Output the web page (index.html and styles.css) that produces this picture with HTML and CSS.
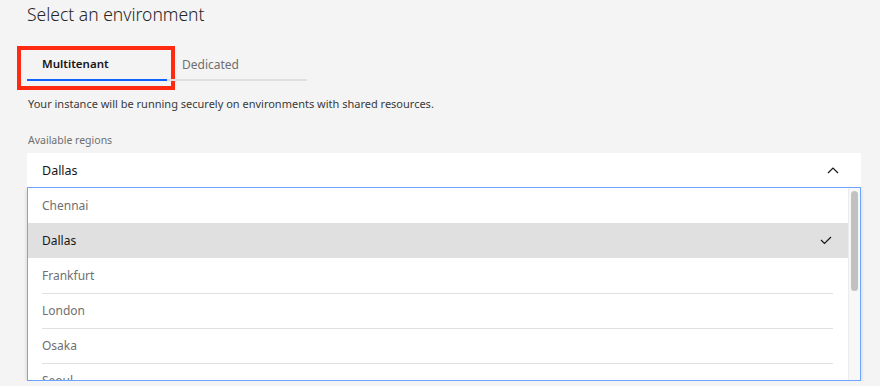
FILE: index.html
```html
<!DOCTYPE html>
<html lang="en">
<head>
  <meta charset="UTF-8" />
  <meta name="viewport" content="width=device-width, initial-scale=1.0" />
  <title>Select an environment</title>
  <link rel="stylesheet" href="styles.css">
</head>
<body>
  <h1 class="title">Select an environment</h1>

  <div class="tabs">
    <div class="tab tab-active">
      Multitenant
      <span class="callout"></span>
    </div>
    <div class="tab">Dedicated</div>
  </div>

  <p class="desc">Your instance will be running securely on environments with shared resources.</p>

  <div class="label">Available regions</div>

  <div class="field">
    <span>Dallas</span>
    <svg class="chevron" width="12" height="7" viewBox="0 0 12 7">
      <path d="M1 6 L6 1 L11 6" fill="none" stroke="#161616" stroke-width="1.2" />
    </svg>
  </div>

  <div class="menu">
    <ul class="options">
      <li class="option">Chennai</li>
      <li class="option option-selected">
        Dallas
        <svg class="check" width="12" height="9" viewBox="0 0 12 9">
          <path d="M1 4 L4.5 7.5 L11 1" fill="none" stroke="#161616" stroke-width="1.2" />
        </svg>
      </li>
      <li class="option">Frankfurt</li>
      <li class="option">London</li>
      <li class="option">Osaka</li>
      <li class="option">Seoul</li>
    </ul>
    <div class="scrollbar">
      <div class="thumb"></div>
    </div>
  </div>
</body>
</html>
```

FILE: styles.css
```css
body {
  margin: 0;
  padding: 0 19px 0 27px;
  background: #f4f4f4;
  font-family: "Noto Sans", "Open Sans", Arial, sans-serif;
  color: #161616;
}

.title {
  margin: 0;
  padding-top: 1px;
  font-size: 17.5px;
  font-weight: 300;
  line-height: 26px;
  color: #262626;
}

.tabs {
  display: flex;
  margin-top: 22px;
}

.tab {
  position: relative;
  width: 140px;
  height: 32px;
  box-sizing: border-box;
  padding: 7px 0 0 15px;
  font-size: 12px;
  color: #6f6f6f;
  border-bottom: 2px solid #e0e0e0;
}

.tab-active {
  font-weight: 600;
  font-size: 11.5px;
  color: #161616;
  border-bottom-color: #0f62fe;
}

.callout {
  position: absolute;
  left: -10px;
  top: -3px;
  width: 158px;
  height: 44px;
  box-sizing: border-box;
  border: 4px solid #ff2a12;
}

.desc {
  margin: 15px 0 0 1px;
  font-size: 11px;
  line-height: 16px;
  color: #393939;
}

.label {
  margin: 21px 0 0 1px;
  font-size: 10.5px;
  line-height: 14px;
  color: #6f6f6f;
}

.field {
  display: flex;
  align-items: center;
  justify-content: space-between;
  margin-top: 6px;
  height: 34px;
  padding: 0 22px 0 15px;
  background: #fff;
  font-size: 12.5px;
}

.chevron {
  display: block;
}

.menu {
  display: flex;
  height: 194px;
  box-sizing: border-box;
  border: 1px solid #6ea6ff;
  background: #fff;
  box-shadow: 0 2px 4px rgba(0, 0, 0, 0.15);
  overflow: hidden;
}

.options {
  flex: 1;
  margin: 0;
  padding: 0;
  list-style: none;
}

.option {
  position: relative;
  display: flex;
  align-items: center;
  justify-content: space-between;
  height: 35px;
  padding: 0 15px 0 14px;
  font-size: 12px;
  color: #6f6f6f;
}

.option + .option::before {
  content: "";
  position: absolute;
  left: 14px;
  right: 15px;
  top: 0;
  border-top: 1px solid #e0e0e0;
}

.option-selected {
  background: #e0e0e0;
  color: #161616;
}

.option-selected::before,
.option-selected + .option::before {
  display: none;
}

.check {
  display: block;
  margin-right: 1px;
}

.scrollbar {
  width: 12px;
  border-left: 1px solid #ececec;
  background: #f7f7f7;
  padding: 3px 2px 0 2px;
  box-sizing: border-box;
}

.thumb {
  width: 7px;
  height: 100px;
  border-radius: 4px;
  background: #c1c1c1;
}
```
